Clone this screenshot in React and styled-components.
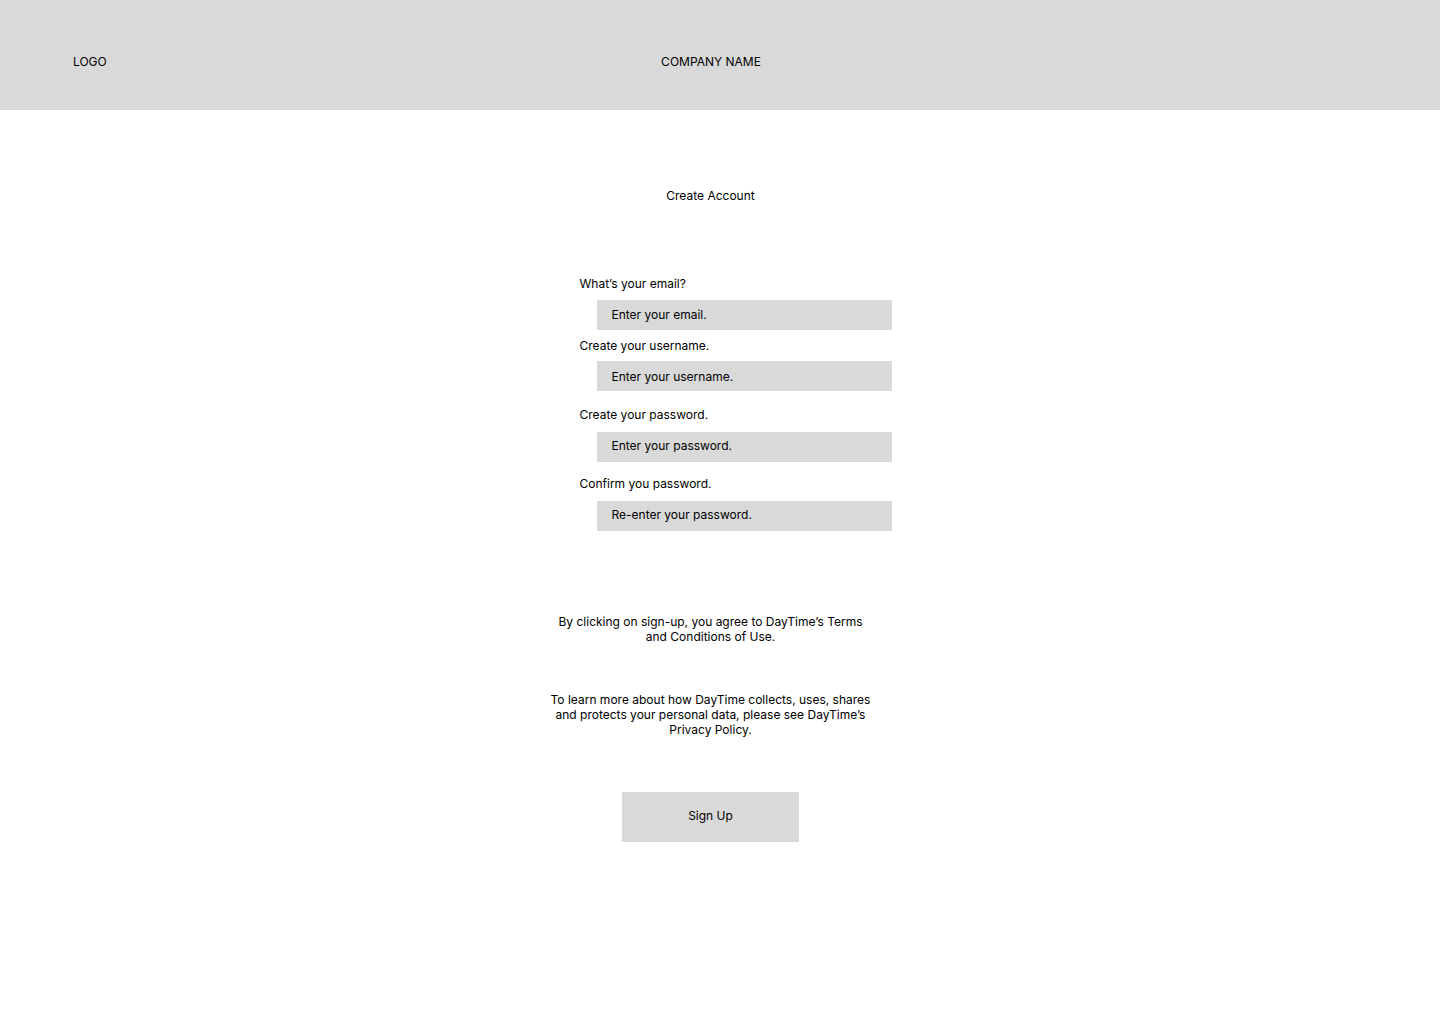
import React from "react";
import styled, { createGlobalStyle } from "styled-components";

const GlobalStyle = createGlobalStyle`
  html, body {
    margin: 0;
    padding: 0;
    background: #ffffff;
  }
  body {
    font-family: Inter, "Liberation Sans", Arial, sans-serif;
    font-size: 12px;
    line-height: 15px;
    color: #000000;
  }
  * {
    box-sizing: border-box;
  }
`;

// spacing in the mockup isn't uniform, so each field carries its own offsets
const fields = [
  { label: "What’s your email?", placeholder: "Enter your email.", top: 0, gap: 9, inset: 7 },
  { label: "Create your username.", placeholder: "Enter your username.", top: 8, gap: 8, inset: 8 },
  { label: "Create your password.", placeholder: "Enter your password.", top: 16, gap: 10, inset: 6 },
  { label: "Confirm you password.", placeholder: "Re-enter your password.", top: 14, gap: 10, inset: 6 },
];

const App = () => {
  return (
    <>
      <GlobalStyle />
      <Header>
        <Logo>LOGO</Logo>
        <CompanyName>COMPANY NAME</CompanyName>
        <span />
      </Header>
      <Main>
        <Title>Create Account</Title>
        <Form>
          {fields.map((f) => (
            <Field key={f.label} $top={f.top}>
              <Label $gap={f.gap}>{f.label}</Label>
              <InputBox $inset={f.inset}>{f.placeholder}</InputBox>
            </Field>
          ))}
        </Form>
        <Notice $width={312} $top={83}>
          By clicking on sign-up, you agree to DayTime’s Terms and Conditions of
          Use.
        </Notice>
        <Notice $width={332} $top={48}>
          To learn more about how DayTime collects, uses, shares and protects
          your personal data, please see DayTime’s Privacy Policy.
        </Notice>
        <SignUpBtn type="button">Sign Up</SignUpBtn>
      </Main>
    </>
  );
};

const Header = styled.header`
  display: grid;
  grid-template-columns: 1fr auto 1fr;
  align-items: start;
  height: 110px;
  padding: 54px 91px 0 73px;
  background-color: #d9d9d9;
`;

const Logo = styled.div`
  justify-self: start;
`;

const CompanyName = styled.div`
  justify-self: center;
`;

const Main = styled.main`
  display: flex;
  flex-direction: column;
  align-items: center;
  width: 1440px;
  padding: 78px 19px 120px 0;
`;

const Title = styled.h1`
  margin: 0;
  font-size: 12px;
  font-weight: 400;
  line-height: 15px;
`;

const Form = styled.form`
  width: 362px;
  margin-top: 73px;
  padding-left: 50px;
`;

const Field = styled.div`
  display: flex;
  flex-direction: column;
  margin-top: ${(p) => p.$top}px;
`;

const Label = styled.label`
  margin-bottom: ${(p) => p.$gap}px;
`;

const InputBox = styled.div`
  width: 295px;
  height: 30px;
  margin-left: 17px;
  padding: ${(p) => p.$inset}px 0 0 15px;
  background-color: #d9d9d9;
`;

const Notice = styled.p`
  width: ${(p) => p.$width}px;
  margin: ${(p) => p.$top}px 0 0;
  text-align: center;
`;

const SignUpBtn = styled.button`
  width: 177px;
  height: 50px;
  margin-top: 55px;
  padding: 0 0 3px;
  border: none;
  background-color: #d9d9d9;
  font-family: inherit;
  font-size: 12px;
  line-height: 15px;
  color: #000000;
  cursor: pointer;
`;

export default App;
